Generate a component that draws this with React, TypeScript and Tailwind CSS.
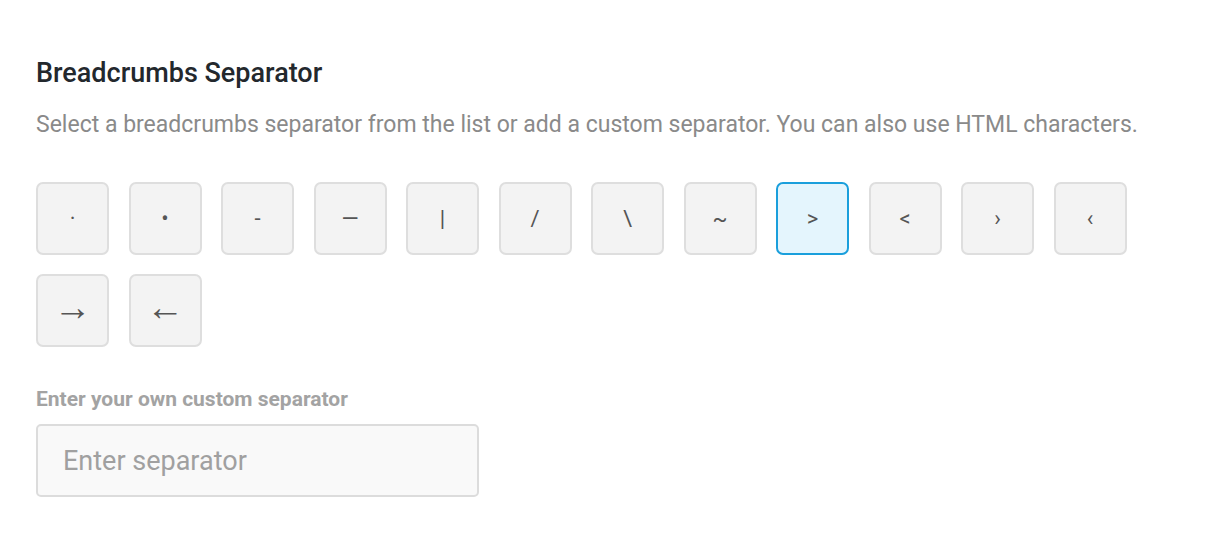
const separators = ["·", "•", "-", "—", "|", "/", "\\", "~", ">", "<", "›", "‹", "→", "←"];

const arrows = ["→", "←"];

function SeparatorButton({ value, active }: { value: string; active?: boolean }) {
  const isArrow = arrows.includes(value);
  return (
    <button
      type="button"
      className={
        active
          ? "flex h-[73px] w-[73px] items-center justify-center rounded-[7px] border-2 border-[#1a9fdc] bg-[#e4f5fd] text-[22px] text-[#555]"
          : "flex h-[73px] w-[73px] items-center justify-center rounded-[7px] border-2 border-[#dedede] bg-[#f3f3f3] text-[22px] text-[#555]"
      }
    >
      {isArrow ? (
        <span className="pb-[7px] font-['Liberation_Sans',sans-serif] text-[38px] leading-none">{value}</span>
      ) : (
        value
      )}
    </button>
  );
}

export default function App() {
  return (
    <div className="min-h-[548px] w-full bg-white font-['Roboto',sans-serif]">
      <div className="px-[36px] pt-[57px]">
        <h2 className="text-[27px] leading-[32px] font-medium text-[#23282d]">Breadcrumbs Separator</h2>
        <p className="mt-[21px] text-[23px] leading-[30px] text-[#8a8a8a]">
          Select a breadcrumbs separator from the list or add a custom separator. You can also use HTML characters.
        </p>

        <div className="mt-[42px] flex w-[1110px] flex-wrap gap-x-[19.5px] gap-y-[19px]">
          {separators.map((s) => (
            <SeparatorButton key={s} value={s} active={s === ">"} />
          ))}
        </div>

        <label className="mt-[39px] block text-[21px] leading-[26px] font-bold text-[#a3a3a3]">
          Enter your own custom separator
        </label>
        <input
          type="text"
          placeholder="Enter separator"
          className="mt-[12px] block h-[73px] w-[443px] rounded-[5px] border-2 border-[#dcdcdc] bg-[#f9f9f9] px-[25px] text-[27px] text-[#555] outline-none placeholder:text-[#a0a0a0]"
        />
      </div>
    </div>
  );
}
